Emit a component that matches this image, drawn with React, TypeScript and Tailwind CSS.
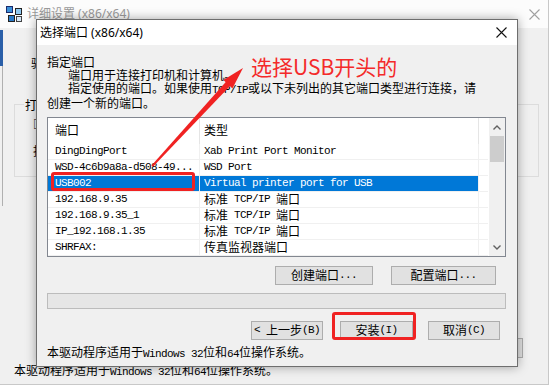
import React from "react";

const isAscii = (s: string) => /^[\x20-\x7e]+$/.test(s);

// SimSun-like: ASCII runs in a narrow mono face, the rest in CJK sans
function Mixed({ text }: { text: string }) {
  return (
    <>
      {text
        .split(/([\x20-\x7e]+)/)
        .filter(Boolean)
        .map((part, i) =>
          isAscii(part) ? (
            <span key={i} className="whitespace-pre font-['Liberation_Mono',monospace] text-[11px] tracking-[-0.6px]">
              {part}
            </span>
          ) : (
            <span key={i}>{part}</span>
          )
        )}
    </>
  );
}

const ports = [
  ["DingDingPort", "Xab Print Port Monitor"],
  ["WSD-4c6b9a8a-d508-49...", "WSD Port"],
  ["USB002", "Virtual printer port for USB"],
  ["192.168.9.35", "标准 TCP/IP 端口"],
  ["192.168.9.35_1", "标准 TCP/IP 端口"],
  ["IP_192.168.1.35", "标准 TCP/IP 端口"],
  ["SHRFAX:", "传真监视器端口"],
];

function CloseX({ color }: { color: string }) {
  return (
    <svg width="11" height="11" viewBox="0 0 11 11">
      <path d="M0.5 0.5 L10.5 10.5 M10.5 0.5 L0.5 10.5" stroke={color} strokeWidth="1.1" />
    </svg>
  );
}

function Btn({ label, w }: { label: string; w: string }) {
  return (
    <div className={`${w} h-[19px] flex items-center justify-center border border-[#adadad] bg-[#e1e1e1] text-[12px]`}>
      <Mixed text={label} />
    </div>
  );
}

export default function App() {
  return (
    <div className="relative w-[552px] h-[388px] overflow-hidden bg-white font-['Noto_Sans','Noto_Sans_CJK_SC',sans-serif] text-black">
      {/* background window */}
      <div className="absolute left-0 top-0 w-[549px] h-[385px] border-r border-b border-[#c8c8c8] bg-[#f0f0f0]">
        <div className="h-[28px] bg-[#fcfcfc] flex items-center pl-[5px] text-[12px] text-[#9a9a9a]">
          <svg width="18" height="18" viewBox="0 0 18 18" className="mr-[4px]">
            <rect x="1" y="1" width="7" height="7" fill="#1a2a6a" />
            <rect x="2" y="2" width="5" height="5" fill="#3a8fd8" />
            <rect x="10" y="3" width="7" height="7" fill="#222" />
            <rect x="11" y="4" width="5" height="5" fill="#8fc8f0" />
            <rect x="3" y="10" width="7" height="7" fill="#222" />
            <rect x="4" y="11" width="5" height="5" fill="#2a7ac8" />
            <rect x="11" y="11" width="6" height="6" fill="#444" />
            <rect x="12" y="12" width="4" height="4" fill="#d8e8f8" />
          </svg>
          <span>详细设置 (x86/x64)</span>
          <div className="ml-auto mr-[8px] mt-[1px]">
            <CloseX color="#a0a0a0" />
          </div>
        </div>
        <div className="absolute left-0 top-[30px] w-[3px] h-[36px] bg-[#2a5fa8]" />
        <div className="absolute left-[2px] top-[66px] w-px h-[140px] bg-[#b0b0b0]" />
        <div className="absolute left-[31px] top-[55px] text-[12px]">驱</div>
        <div className="absolute left-[14px] top-[104px] w-[525px] h-[73px] border border-[#dcdcdc]">
          <div className="absolute left-[9px] top-[-8px] bg-[#f0f0f0] px-[1px] text-[12px]">打</div>
          <div className="absolute left-[18px] top-[11px] text-[12px]">□</div>
          <div className="absolute left-[18px] top-[38px] text-[12px]">指</div>
        </div>
        <div className="absolute left-[450px] top-[338px] w-[73px] h-[20px] border border-[#adadad] bg-[#e1e1e1]" />
        <div className="absolute left-[14px] top-[363px] text-[12px] leading-[16px]">
          <Mixed text="本驱动程序适用于Windows 32位和64位操作系统。" />
        </div>
      </div>

      {/* front dialog */}
      <div className="absolute left-[36px] top-[19px] w-[482px] h-[348px] border border-[#6e6e6e] bg-[#f0f0f0] shadow-[0_0_10px_rgba(0,0,0,0.35)] flex flex-col">
        <div className="h-[25px] shrink-0 bg-white flex items-center pl-[3px] text-[12px]">
          <span>选择端口 (x86/x64)</span>
          <div className="ml-auto mr-[10px]">
            <CloseX color="#111" />
          </div>
        </div>

        <div className="flex flex-col pl-[10px] pr-[11px]">
          <div className="pt-[11px] text-[12px] leading-[13px]">
            <div>指定端口</div>
            <div className="pl-[21px]">端口用于连接打印机和计算机。</div>
            <div className="pl-[21px]">
              <Mixed text="指定使用的端口。如果使用TCP/IP或以下未列出的其它端口类型进行连接，请" />
            </div>
            <div>创建一个新的端口。</div>
          </div>

          <div className="mt-[7px] h-[140px] border border-[#828790] bg-white flex">
            <div className="w-[440px] flex flex-col text-[12px]">
              <div className="h-[26px] flex">
                <div className="w-[152px] border-r border-[#e5e5e5] pl-[7px] flex items-center">端口</div>
                <div className="w-[279px] border-r border-[#e5e5e5] pl-[4px] flex items-center">类型</div>
              </div>
              {ports.map(([port, type]) => {
                const sel = port === "USB002";
                return (
                  <div key={port} className="h-[16px] flex border-b border-[#f0f0f0]">
                    <div className={`w-[152px] border-r border-[#f0f0f0] pl-[7px] flex items-center leading-none ${sel ? "bg-[#0078d7] text-white" : ""}`}>
                      <Mixed text={port} />
                    </div>
                    <div className={`w-[279px] border-r border-[#f0f0f0] pl-[4px] flex items-center leading-none ${sel ? "bg-[#0078d7] text-white" : ""}`}>
                      <Mixed text={type} />
                    </div>
                  </div>
                );
              })}
            </div>
            <div className="w-[16px] ml-auto bg-[#f0f0f0] flex flex-col">
              <div className="h-[18px] flex items-center justify-center">
                <svg width="8" height="5" viewBox="0 0 8 5">
                  <path d="M0.5 4.5 L4 1 L7.5 4.5" stroke="#606060" strokeWidth="1.4" fill="none" />
                </svg>
              </div>
              <div className="mx-px h-[26px] bg-[#cdcdcd]" />
              <div className="flex-1" />
              <div className="h-[18px] flex items-center justify-center">
                <svg width="8" height="5" viewBox="0 0 8 5">
                  <path d="M0.5 0.5 L4 4 L7.5 0.5" stroke="#606060" strokeWidth="1.4" fill="none" />
                </svg>
              </div>
            </div>
          </div>

          <div className="mt-[9px] flex justify-end gap-[18px] pr-[10px]">
            <Btn label="创建端口..." w="w-[98px]" />
            <Btn label="配置端口..." w="w-[105px]" />
          </div>

          <div className="mt-[8px] h-[16px] border border-[#bcbcbc] bg-[#e6e6e6]" />

          <div className="mt-[12px] flex justify-end pr-[6px]">
            <Btn label="< 上一步(B)" w="w-[72px]" />
            <div className="ml-[17px]">
              <Btn label="安装(I)" w="w-[73px]" />
            </div>
            <div className="ml-[15px]">
              <Btn label="取消(C)" w="w-[72px]" />
            </div>
          </div>

          <div className="mt-[6px] text-[12px] leading-[14px]">
            <Mixed text="本驱动程序适用于Windows 32位和64位操作系统。" />
          </div>
        </div>
      </div>

      {/* red annotations */}
      <div className="absolute left-[51px] top-[172px] w-[144px] h-[19px] border-[3px] border-[#f02222] rounded-[3px]" />
      <div className="absolute left-[332px] top-[312px] w-[84px] h-[28px] border-[3px] border-[#f02222] rounded-[3px]" />
      <div className="absolute left-[251px] top-[55px] text-[21px] leading-[22px] text-[#f42a2a] font-['Noto_Sans_CJK_SC',sans-serif]">
        选择USB开头的
      </div>
      <svg className="absolute left-0 top-0 pointer-events-none" width="552" height="388" viewBox="0 0 552 388">
        <polygon points="151.5,165.5 153,166.8 230.5,85.5 226.2,81.5" fill="#f02222" />
        <polygon points="243,68 232.4,88.6 223.4,80" fill="#f02222" />
      </svg>
    </div>
  );
}
